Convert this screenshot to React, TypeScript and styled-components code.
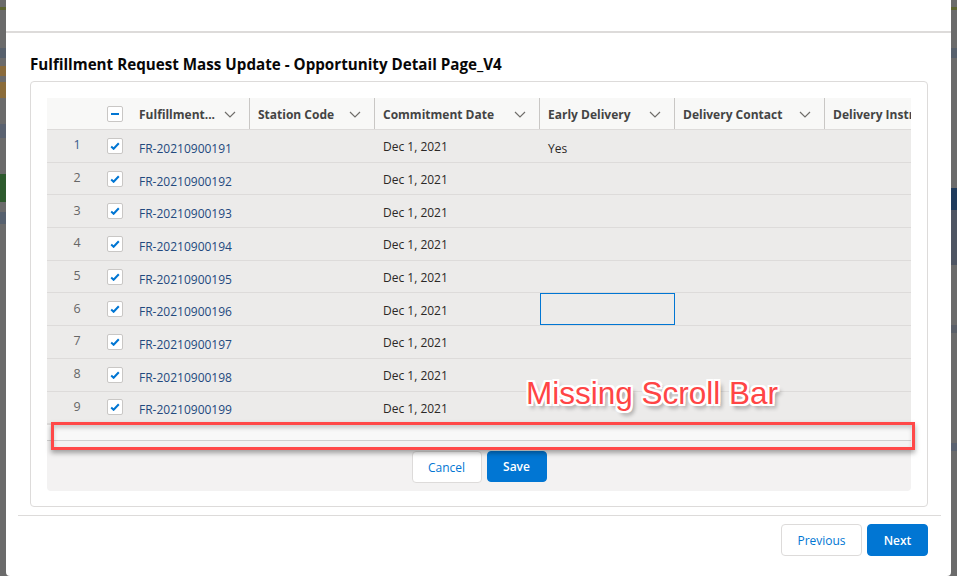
import styled, { createGlobalStyle } from "styled-components";

const GlobalStyle = createGlobalStyle`
    * {
        box-sizing: border-box;
    }
    body {
        margin: 0;
        background: #6f6f6f;
        font-family: "Open Sans", "Noto Sans", sans-serif;
        color: #181818;
    }
`;

const Screen = styled.div`
    display: flex;
    width: 957px;
    height: 576px;
    overflow: hidden;
`;

const Backdrop = styled.div`
    display: flex;
    flex-direction: column;
    width: 6px;
    flex-shrink: 0;
    background: #6b6b6b;
`;

const Stripe = styled.div<{ color: string; size: number }>`
    height: ${({ size }) => size}px;
    background: ${({ color }) => color};
    flex-shrink: 0;
`;

const Modal = styled.div`
    width: 945px;
    min-width: 0;
    flex-shrink: 0;
    display: flex;
    flex-direction: column;
    background: #fff;
    border-radius: 0 0 4px 4px;
`;

const ModalHeader = styled.div`
    height: 33px;
    border-bottom: 2px solid #dddbda;
    flex-shrink: 0;
`;

const ModalBody = styled.div`
    padding: 21px 23px 0 24px;
`;

const Title = styled.h2`
    margin: 0 0 7px;
    font-size: 15.2px;
    line-height: 20px;
    font-weight: 700;
    color: #080707;
`;

const Card = styled.div`
    position: relative;
    border: 1px solid #dddbda;
    border-radius: 4px;
    padding: 16px 16px 15px;
`;

const TableFrame = styled.div`
    width: 864px;
    overflow: hidden;
    border-radius: 0 0 4px 4px;
`;

const COLUMNS = "50px 34px 119px 125px 165px 135px 150px 200px";

const HeaderRow = styled.div`
    display: grid;
    grid-template-columns: ${COLUMNS};
    height: 32px;
    background: #f8f8f7;
    border-bottom: 1px solid #dddbda;
`;

const BodyRow = styled.div`
    display: grid;
    grid-template-columns: ${COLUMNS};
    height: 32.7px;
    background: #ecebea;
    border-bottom: 1px solid #dddbda;
    &:last-child {
        border-bottom: none;
    }
`;

const HeaderCell = styled.div<{ divided?: boolean }>`
    display: flex;
    align-items: center;
    justify-content: space-between;
    padding: 2px 13px 0 8px;
    border-right: ${({ divided }) => (divided ? "1px solid #c9c7c5" : "none")};
    font-size: 12px;
    font-weight: 700;
    color: #444;
    white-space: nowrap;
    overflow: hidden;
`;

const NumberCell = styled.div<{ active?: boolean }>`
    display: flex;
    align-items: center;
    justify-content: center;
    padding-left: 10px;
    padding-bottom: 2px;
    font-size: 12.5px;
    color: ${({ active }) => (active ? "#3a5a8c" : "#666")};
`;

const CheckCell = styled.div`
    display: flex;
    align-items: center;
    justify-content: center;
    padding-left: 2px;
`;

const Cell = styled.div<{ focused?: boolean }>`
    display: flex;
    align-items: center;
    padding: 2px 8px 0;
    font-size: 12px;
    color: #2b2826;
    white-space: nowrap;
    box-shadow: ${({ focused }) => (focused ? "inset 0 0 0 1px #0176d3" : "none")};
`;

const RecordLink = styled.a`
    color: #23497e;
    text-decoration: none;
    padding-top: 3px;
`;

const Box = styled.span`
    display: inline-flex;
    align-items: center;
    justify-content: center;
    width: 16px;
    height: 16px;
    background: #fff;
    border: 1px solid #c9c7c5;
    border-radius: 2px;
`;

const ScrollTrack = styled.div`
    height: 17px;
    background: #f8f8f8;
    border-top: 1px solid #dddbda;
    border-bottom: 1px solid #cfcfcf;
`;

const TableFooter = styled.div`
    display: flex;
    justify-content: center;
    gap: 5px;
    padding: 10px 0 8px;
    background: #f3f2f2;
`;

const Button = styled.button<{ brand?: boolean; wide?: number }>`
    height: ${({ wide }) => (wide ? 32 : 31)}px;
    min-width: ${({ wide }) => wide ?? 60}px;
    padding: 0 12px;
    border-radius: 4px;
    border: 1px solid ${({ brand }) => (brand ? "#0176d3" : "#dddbda")};
    background: ${({ brand }) => (brand ? "#0176d3" : "#fff")};
    color: ${({ brand }) => (brand ? "#fff" : "#0176d3")};
    font-family: "Open Sans", sans-serif;
    font-size: 12px;
    font-weight: ${({ brand }) => (brand ? 600 : 400)};
`;

const ModalFooter = styled.div`
    display: flex;
    justify-content: flex-end;
    gap: 5px;
    margin: 8px 10px 0 12px;
    padding: 8px 13px 0 0;
    border-top: 1px solid #dddbda;
`;

const Highlight = styled.div`
    position: absolute;
    left: 20px;
    top: 340px;
    width: 864px;
    height: 28px;
    border: 3px solid #ff4848;
    box-shadow: 0 3px 5px rgba(0, 0, 0, 0.35), inset 0 3px 4px rgba(0, 0, 0, 0.18);
`;

const Callout = styled.div`
    position: absolute;
    left: 495px;
    top: 293px;
    font-family: "Liberation Sans", Arial, sans-serif;
    font-size: 31.5px;
    line-height: 36px;
    color: #ff4545;
    white-space: nowrap;
    text-shadow: 2px 0 0 #fff, -2px 0 0 #fff, 0 2px 0 #fff, 0 -2px 0 #fff,
        2px 2px 0 #fff, -2px -2px 0 #fff, 2px -2px 0 #fff, -2px 2px 0 #fff,
        3px 4px 4px rgba(0, 0, 0, 0.45);
`;

const Chevron = () => (
    <svg width="12" height="7" viewBox="0 0 12 7">
        <polyline points="1,1 6,6 11,1" fill="none" stroke="#706e6b" strokeWidth="1.2" />
    </svg>
);

const Check = () => (
    <svg width="10" height="8" viewBox="0 0 10 8">
        <path d="M1.2 4.6 L3.6 6.8 L8.8 1.2" fill="none" stroke="#0176d3" strokeWidth="2" />
    </svg>
);

const Minus = () => (
    <svg width="10" height="4" viewBox="0 0 10 4">
        <rect x="1" y="1" width="8" height="2" fill="#0176d3" />
    </svg>
);

const leftStripes = [
    ["#6b6b6b", 7], ["#5d6431", 3], ["#6b6b6b", 38], ["#57606c", 10], ["#6b6b6b", 8],
    ["#8a6b3c", 10], ["#6b6b6b", 6], ["#8b6c3a", 16], ["#6b6b6b", 26], ["#5a6270", 14],
    ["#6b6b6b", 22], ["#6a6a6a", 14], ["#2d5a2d", 28], ["#6b6b6b", 10], ["#56606e", 12],
    ["#6b6b6b", 360],
] as const;

const rightStripes = [
    ["#6b6b6b", 7], ["#5d6431", 3], ["#6b6b6b", 38], ["#57606c", 10], ["#6b6b6b", 130],
    ["#1f3b5c", 22], ["#4e5563", 55], ["#6b6b6b", 60], ["#5a5f68", 8], ["#6b6b6b", 110],
    ["#5a6270", 8], ["#6b6b6b", 130],
] as const;

const headers = [
    { label: "Fulfillment...", chevron: true },
    { label: "Station Code", chevron: true },
    { label: "Commitment Date", chevron: true },
    { label: "Early Delivery", chevron: true },
    { label: "Delivery Contact", chevron: true },
    { label: "Delivery Instructions", chevron: false },
];

const records = Array.from({ length: 9 }, (_, i) => ({
    id: `FR-2021090019${i + 1}`,
    date: "Dec 1, 2021",
    early: i === 0 ? "Yes" : "",
}));

function App() {
    return (
        <>
            <GlobalStyle />
            <Screen>
                <Backdrop>
                    {leftStripes.map(([color, size], i) => (
                        <Stripe key={i} color={color} size={size} />
                    ))}
                </Backdrop>
                <Modal>
                    <ModalHeader />
                    <ModalBody>
                        <Title>Fulfillment Request Mass Update - Opportunity Detail Page_V4</Title>
                        <Card>
                            <TableFrame>
                                <HeaderRow>
                                    <NumberCell />
                                    <CheckCell>
                                        <Box><Minus /></Box>
                                    </CheckCell>
                                    {headers.map((h) => (
                                        <HeaderCell key={h.label} divided>
                                            <span>{h.label}</span>
                                            {h.chevron && <Chevron />}
                                        </HeaderCell>
                                    ))}
                                </HeaderRow>
                                {records.map((r, i) => (
                                    <BodyRow key={r.id}>
                                        <NumberCell active={i === 0}>{i + 1}</NumberCell>
                                        <CheckCell>
                                            <Box><Check /></Box>
                                        </CheckCell>
                                        <Cell>
                                            <RecordLink href="#">{r.id}</RecordLink>
                                        </Cell>
                                        <Cell />
                                        <Cell>{r.date}</Cell>
                                        <Cell focused={i === 5}>
                                            <span style={{ paddingTop: 3 }}>{r.early}</span>
                                        </Cell>
                                        <Cell />
                                        <Cell />
                                    </BodyRow>
                                ))}
                                <ScrollTrack />
                                <TableFooter>
                                    <Button wide={70}>Cancel</Button>
                                    <Button brand>Save</Button>
                                </TableFooter>
                            </TableFrame>
                            <Highlight />
                            <Callout>Missing Scroll Bar</Callout>
                        </Card>
                    </ModalBody>
                    <ModalFooter>
                        <Button wide={81}>Previous</Button>
                        <Button brand wide={61}>Next</Button>
                    </ModalFooter>
                </Modal>
                <Backdrop>
                    {rightStripes.map(([color, size], i) => (
                        <Stripe key={i} color={color} size={size} />
                    ))}
                </Backdrop>
            </Screen>
        </>
    );
}

export default App;
